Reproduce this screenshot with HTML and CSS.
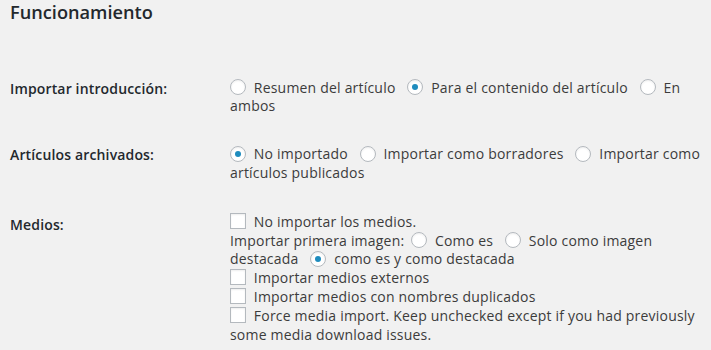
FILE: index.html
```html
<!DOCTYPE html>
<html lang="es">
<head>
  <meta charset="UTF-8" />
  <meta name="viewport" content="width=device-width, initial-scale=1.0" />
  <title>Funcionamiento</title>
  <link rel="stylesheet" href="styles.css">
</head>
<body>
  <div class="wrap">
    <h3 class="section-title">Funcionamiento</h3>

    <table class="form-table">
      <!-- Intro -->
      <tr>
        <th>Importar introducción:</th>
        <td>
          <label class="opt"><input type="radio" name="intro"> Resumen del artículo</label>
          <label class="opt"><input type="radio" name="intro" checked> Para el contenido del artículo</label>
          <label class="opt"><input type="radio" name="intro"> En ambos</label>
        </td>
      </tr>

      <!-- Archived -->
      <tr>
        <th>Artículos archivados:</th>
        <td>
          <label class="opt"><input type="radio" name="archived" checked> No importado</label>
          <label class="opt"><input type="radio" name="archived"> Importar como borradores</label>
          <label class="opt"><input type="radio" name="archived"> Importar como artículos publicados</label>
        </td>
      </tr>

      <!-- Media -->
      <tr class="media-row">
        <th>Medios:</th>
        <td>
          <div class="line"><label><input type="checkbox"> No importar los medios.</label></div>
          <div class="line">
            <span class="lead">Importar primera imagen:</span>
            <label class="opt"><input type="radio" name="first_image"> Como es</label>
            <label class="opt"><input type="radio" name="first_image"> Solo como imagen destacada</label>
            <label class="opt"><input type="radio" name="first_image" checked> como es y como destacada</label>
          </div>
          <div class="line"><label><input type="checkbox"> Importar medios externos</label></div>
          <div class="line"><label><input type="checkbox"> Importar medios con nombres duplicados</label></div>
          <div class="line"><label><input type="checkbox"> Force media import. Keep unchecked except if you had previously some media download issues.</label></div>
        </td>
      </tr>
    </table>
  </div>
</body>
</html>
```

FILE: styles.css
```css
body {
  margin: 0;
  padding: 0 5px 0 10px;
  background: #f1f1f1;
  color: #3c3c3c;
  font-family: "Open Sans", "Liberation Sans", sans-serif;
  font-size: 14px;
  line-height: 18.2px;
  letter-spacing: 0.2px;
}
.section-title {
  margin: 0;
  font-size: 18.2px;
  line-height: 24px;
  font-weight: 600;
  letter-spacing: 0;
  color: #23282d;
}
.form-table {
  width: 100%;
  margin-top: 36px;
  border-collapse: collapse;
}
.form-table th {
  width: 200px;
  padding: 20px 10px 0 0;
  vertical-align: top;
  text-align: left;
  font-weight: 600;
  letter-spacing: 0.15px;
  color: #23282d;
}
.form-table td {
  padding: 19px 0 11px 10px;
  vertical-align: top;
}
.opt {
  margin-right: 8px;
}
.lead {
  margin-right: 3px;
}
.media-row th {
  padding-top: 23px;
}
.media-row td {
  padding-top: 20px;
  line-height: 18.8px;
}
input[type="radio"],
input[type="checkbox"] {
  -webkit-appearance: none;
  appearance: none;
  position: relative;
  width: 16px;
  height: 16px;
  margin: -4px 4px 0 0;
  vertical-align: middle;
  background: #fff;
  border: 1px solid #b4b9be;
  box-shadow: inset 0 1px 2px rgba(0, 0, 0, 0.07);
  box-sizing: border-box;
}
input[type="radio"] {
  border-radius: 50%;
}
input[type="radio"]:checked::before {
  content: "";
  position: absolute;
  left: 4px;
  top: 4px;
  width: 6px;
  height: 6px;
  border-radius: 50%;
  background: #1e8cbe;
}
```
